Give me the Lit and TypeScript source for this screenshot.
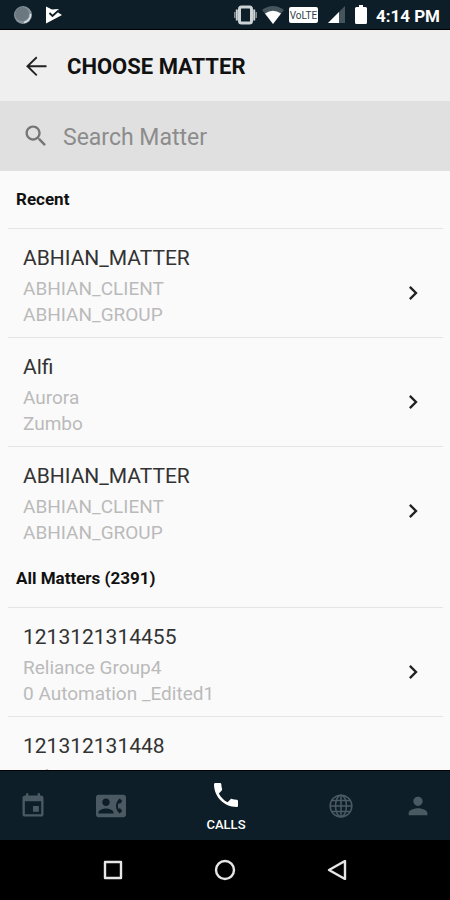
import { LitElement, html, css, svg } from "lit";
import { customElement, property } from "lit/decorators.js";

interface Matter {
  name: string;
  client: string;
  group: string;
}

const recent: Matter[] = [
  { name: "ABHIAN_MATTER", client: "ABHIAN_CLIENT", group: "ABHIAN_GROUP" },
  { name: "Alfi", client: "Aurora", group: "Zumbo" },
  { name: "ABHIAN_MATTER", client: "ABHIAN_CLIENT", group: "ABHIAN_GROUP" },
];

const all: Matter[] = [
  { name: "1213121314455", client: "Reliance Group4", group: "0 Automation _Edited1" },
  { name: "121312131448", client: "Reliance Group4", group: "0 Automation _Edited1" },
];

const glyphs = {
  calendar: svg`<path d="M17 12h-5v5h5v-5zM16 1v2H8V1H6v2H5c-1.11 0-1.99.9-1.99 2L3 19c0 1.1.89 2 2 2h14c1.1 0 2-.9 2-2V5c0-1.1-.9-2-2-2h-1V1h-2zm3 18H5V8h14v11z"/>`,
  contacts: svg`<path d="M22 3H2C.9 3 0 3.9 0 5v14c0 1.1.9 2 2 2h20c1.1 0 1.99-.9 1.99-2L24 5c0-1.1-.9-2-2-2zM8 6c1.66 0 3 1.34 3 3s-1.34 3-3 3-3-1.34-3-3 1.34-3 3-3zm6 12H2v-1c0-2 4-3.1 6-3.1s6 1.1 6 3.1v1zm3.85-4h1.64L21 16l-1.99 1.99c-1.31-.98-2.28-2.38-2.73-3.99-.18-.64-.28-1.31-.28-2s.1-1.36.28-2c.45-1.62 1.42-3.01 2.73-3.99L21 8l-1.51 2h-1.64c-.22.63-.35 1.3-.35 2s.13 1.37.35 2z"/>`,
  phone: svg`<path d="M6.62 10.79c1.44 2.83 3.76 5.14 6.59 6.59l2.2-2.2c.27-.27.67-.36 1.02-.24 1.12.37 2.33.57 3.57.57.55 0 1 .45 1 1V20c0 .55-.45 1-1 1-9.39 0-17-7.61-17-17 0-.55.45-1 1-1h3.5c.55 0 1 .45 1 1 0 1.25.2 2.45.57 3.57.11.35.03.74-.25 1.02l-2.2 2.2z"/>`,
  globe: svg`<g fill="none" stroke="currentColor" stroke-width="1.3"><circle cx="12" cy="12" r="9.3"/><ellipse cx="12" cy="12" rx="4.7" ry="9.3"/><path d="M12 2.7v18.6M2.7 12h18.6M4.2 7.2h15.6M4.2 16.8h15.6"/></g>`,
  person: svg`<path d="M12 12c2.21 0 4-1.79 4-4s-1.79-4-4-4-4 1.79-4 4 1.79 4 4 4zm0 2c-2.67 0-8 1.34-8 4v2h16v-2c0-2.66-5.33-4-8-4z"/>`,
  back: svg`<path d="M21 10.500H6.800L13.200 4.200L12.100 3L3.500 11.400L12.100 19.800L13.200 18.600L6.800 12.300H21z"/>`,
  search: svg`<path d="M15.5 14h-.79l-.28-.27C15.41 12.59 16 11.11 16 9.5 16 5.91 13.09 3 9.5 3S3 5.91 3 9.5 5.91 16 9.5 16c1.61 0 3.09-.59 4.23-1.57l.27.28v.79l5 4.99L20.49 19l-4.99-5zm-6 0C7.01 14 5 11.99 5 9.5S7.01 5 9.5 5 14 7.01 14 9.5 11.99 14 9.5 14z"/>`,
  chevron: svg`<path d="M10 6L8.59 7.41 13.17 12l-4.58 4.59L10 18l6-6z"/>`,
};

const icon = (name: keyof typeof glyphs) =>
  html`<svg class="icon" viewBox="0 0 24 24" aria-hidden="true">${glyphs[name]}</svg>`;

@customElement("status-bar")
export class StatusBar extends LitElement {
  static styles = css`
    :host { display: flex; align-items: center; height: 30px; padding: 0 10px 0 14px; background: #0d1e28; color: #fff; border-bottom: 1px solid #000; box-sizing: border-box; }
    svg { display: block; flex: none; }
    .left { display: flex; align-items: center; gap: 13px; flex: 1; }
    .right { display: flex; align-items: center; gap: 5px; }
    .signal { margin: 0 5px; }
    .time { font-size: 17px; line-height: 24px; font-weight: 700; margin-left: 4px; padding-top: 2px; white-space: nowrap; }
  `;
  render() {
    return html`
      <div class="left">
        <svg width="18" height="18" viewBox="0 0 18 18"><circle cx="9" cy="9" r="9" fill="#87939a"/><circle cx="8" cy="8" r="7" fill="#6b787f"/><path d="M16.500 8A8 8 0 0 1 10 16.500" fill="none" stroke="#dfe4e6" stroke-width="1.500"/></svg>
        <svg width="17" height="18" viewBox="0 0 17 18"><path d="M1 0.500L7 3.500L13.500 3L13 6.500L17 9L1 17.500Z" fill="#fff"/><path d="M4.500 7L7.500 10L13.500 4.500" fill="none" stroke="#0d1e28" stroke-width="1.800"/></svg>
      </div>
      <div class="right">
        <svg width="23" height="20" viewBox="0 0 23 20"><rect x="5.500" y="2" width="12" height="16" rx="2" fill="#0d1e28" stroke="#cdd2d4" stroke-width="3"/><path d="M2.800 4.500v11M20.200 4.500v11" stroke="#cdd2d4" stroke-width="2"/><path d="M.8 7v6M22.200 7v6" stroke="#87939a" stroke-width="1.500"/></svg>
        <svg width="22" height="18" viewBox="0 0 22 18"><path d="M0 4Q11-4 22 4L11 18Z" fill="#46545c"/><path d="M3 7.500Q11 2 19 7.500L11 18Z" fill="#fff"/></svg>
        <svg width="29" height="16" viewBox="0 0 29 16"><rect width="29" height="16" rx="2" fill="#fff"/><text x="14.500" y="12" text-anchor="middle" font-family="Roboto, sans-serif" font-size="10" fill="#33434c">VoLTE</text></svg>
        <svg class="signal" width="17" height="17" viewBox="0 0 17 17"><path d="M17 0V17H0Z" fill="#46545c"/><path d="M11 6V17H0Z" fill="#fff"/></svg>
        <svg width="12" height="19" viewBox="0 0 12 19"><path d="M4 0h4v2h2.500q1.500 0 1.500 1.500v14q0 1.500-1.500 1.500h-9q-1.500 0-1.500-1.500v-14Q0 2 1.500 2H4z" fill="#fff"/></svg>
        <span class="time">4:14 PM</span>
      </div>`;
  }
}

@customElement("matter-list")
export class MatterList extends LitElement {
  @property() heading = "";
  @property({ attribute: false }) items: Matter[] = [];
  static styles = css`
    :host { display: block; }
    h2 { margin: 0; padding: 0 16px 19px; font-size: 17px; line-height: 20px; font-weight: 700; color: #111; }
    ul { list-style: none; margin: 0; padding: 0 7px 0 8px; }
    li { border-top: 1px solid #e4e4e4; }
    .row { display: flex; align-items: center; width: 100%; height: 108px; padding: 0 16px 0 15px; border: 0; background: none; font: inherit; text-align: left; cursor: pointer; }
    .text { flex: 1; display: flex; flex-direction: column; min-width: 0; padding-top: 4px; }
    .name { font-size: 21px; line-height: 32px; margin-bottom: 2px; font-weight: 400; color: #333; }
    .sub { font-size: 19px; line-height: 26px; color: #bababa; }
    .icon { width: 28px; height: 28px; fill: #222; flex: none; margin-top: 20px; }
  `;
  render() {
    return html`
      <h2>${this.heading}</h2>
      <ul>
        ${this.items.map((m) => html`
          <li><button class="row">
            <span class="text"><span class="name">${m.name}</span><span class="sub">${m.client}</span><span class="sub">${m.group}</span></span>
            ${icon("chevron")}
          </button></li>`)}
      </ul>`;
  }
}

@customElement("app-root")
export class AppRoot extends LitElement {
  static styles = css`
    :host { display: flex; flex-direction: column; height: 100vh; overflow: hidden; background: #fafafa; font-family: Roboto, sans-serif; }
    * { box-sizing: border-box; }
    button { border: 0; background: none; padding: 0; font: inherit; color: inherit; cursor: pointer; }
    .icon { display: block; width: 28px; height: 28px; fill: currentColor; flex: none; }
    header { display: flex; align-items: center; gap: 17px; height: 71px; padding: 2px 22px 0; background: #efefef; flex: none; }
    h1 { margin: 0; font-size: 22px; line-height: 28px; font-weight: 700; color: #111; }
    .back { color: #222; }
    .search { display: flex; align-items: center; gap: 13px; height: 70px; padding: 0 22px; background: #e0e0e0; color: #757575; flex: none; }
    .search input { flex: 1; min-width: 0; border: 0; padding: 4px 0 0; background: none; outline: none; font: inherit; font-size: 23px; line-height: 28px; color: #222; }
    .search input::placeholder { color: #8c8c8c; opacity: 1; }
    main { flex: 1; min-height: 0; overflow: hidden; padding-top: 18px; }
    .more { padding-top: 13px; }
    .tabs { display: grid; grid-template-columns: 66px 90px 1fr 90px 64px; height: 70px; background: #0d1e28; color: #4b5a62; border-top: 1px solid #000; flex: none; }
    .tab { display: flex; flex-direction: column; align-items: center; justify-content: center; }
    .contacts .icon { width: 30px; height: 30px; }
    .active { color: #fff; }
    .active .icon { width: 32px; height: 32px; }
    .label { font-size: 13px; line-height: 16px; font-weight: 500; margin-top: 6px; }
    .system { display: grid; grid-template-columns: 1fr 1fr 1fr; padding: 0 57px; height: 60px; background: #000; flex: none; }
    .system button { display: flex; align-items: center; justify-content: center; }
    .system svg { fill: none; stroke: #e6e6e6; stroke-width: 2.4; stroke-linejoin: round; }
  `;
  render() {
    return html`
      <status-bar></status-bar>
      <header>
        <button class="back" aria-label="Back">${icon("back")}</button>
        <h1>CHOOSE MATTER</h1>
      </header>
      <label class="search">${icon("search")}<input type="text" placeholder="Search Matter" aria-label="Search Matter" /></label>
      <main>
        <matter-list heading="Recent" .items=${recent}></matter-list>
        <matter-list class="more" heading="All Matters (2391)" .items=${all}></matter-list>
      </main>
      <nav class="tabs">
        <button class="tab" aria-label="Calendar">${icon("calendar")}</button>
        <button class="tab contacts" aria-label="Contacts">${icon("contacts")}</button>
        <button class="tab active">${icon("phone")}<span class="label">CALLS</span></button>
        <button class="tab" aria-label="Web">${icon("globe")}</button>
        <button class="tab" aria-label="Profile">${icon("person")}</button>
      </nav>
      <nav class="system">
        <button aria-label="Overview"><svg width="20" height="20" viewBox="0 0 20 20"><rect x="2" y="2" width="16" height="16"/></svg></button>
        <button aria-label="Home"><svg width="22" height="22" viewBox="0 0 22 22"><circle cx="11" cy="11" r="9"/></svg></button>
        <button aria-label="Go back"><svg width="20" height="20" viewBox="0 0 20 20"><path d="M18 1V19L2 10Z"/></svg></button>
      </nav>`;
  }
}
